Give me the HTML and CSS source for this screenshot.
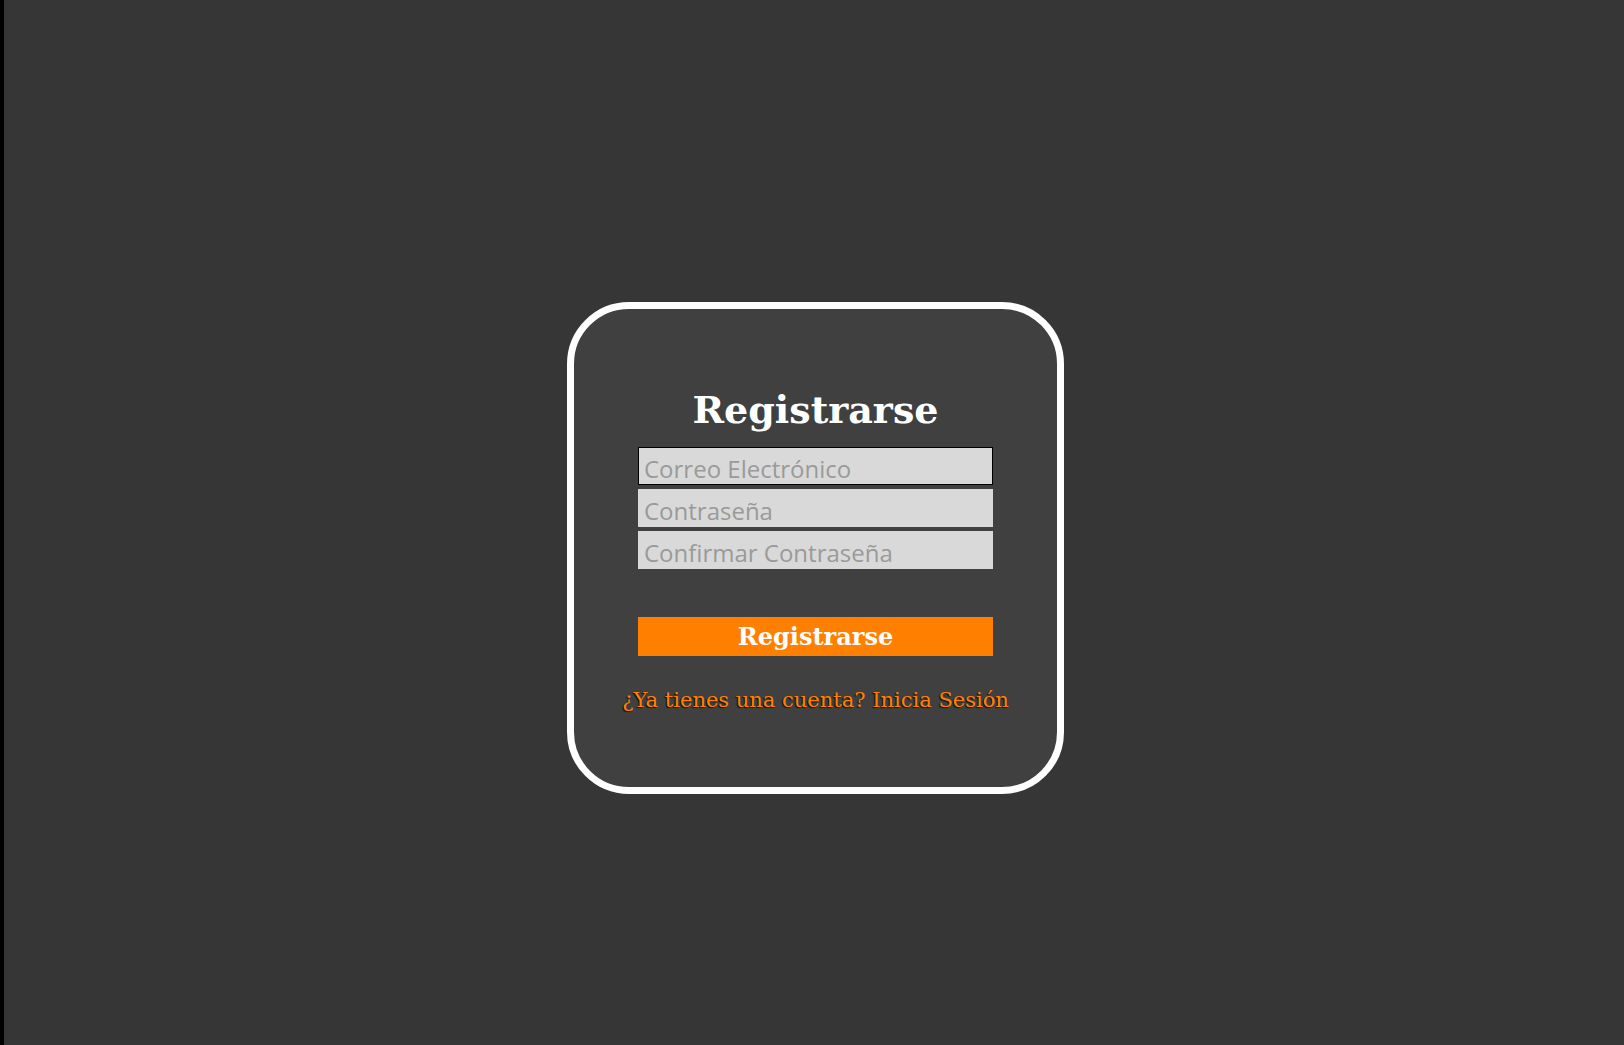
FILE: index.html
```html
<!DOCTYPE html>
<html lang="es">
<head>
<meta charset="utf-8">
<title>Registrarse</title>
<link rel="stylesheet" href="styles.css">
</head>
<body>
<main class="page">
  <form class="card">
    <h1 class="title">Registrarse</h1>
    <div class="fields">
      <input class="field field-active" type="email" placeholder="Correo Electrónico">
      <input class="field" type="password" placeholder="Contraseña">
      <input class="field" type="password" placeholder="Confirmar Contraseña">
    </div>
    <button class="submit" type="button">Registrarse</button>
    <a class="login-link" href="#">¿Ya tienes una cuenta? Inicia Sesión</a>
  </form>
</main>
</body>
</html>
```
FILE: styles.css
```css
* { box-sizing: border-box; }
html, body { margin: 0; padding: 0; height: 100%; }
body {
  background: #363636;
  border-left: 4px solid #000;
}
.page {
  min-height: 100%;
  display: flex;
  justify-content: center;
  align-items: flex-start;
  padding-top: 302px;
  padding-left: 3px;
}
.card {
  width: 497px;
  height: 492px;
  border: 7px solid #fff;
  border-radius: 62px;
  background: #404040;
  display: flex;
  flex-direction: column;
  align-items: center;
  padding-top: 77px;
}
.title {
  margin: 0;
  font-family: "DejaVu Serif", "Liberation Serif", serif;
  font-weight: bold;
  font-size: 38px;
  line-height: 48px;
  color: #fff;
}
.fields {
  margin-top: 13px;
  display: flex;
  flex-direction: column;
  gap: 4px;
  width: 355px;
}
.field {
  display: block;
  width: 355px;
  height: 38px;
  margin: 0;
  border: 1px solid transparent;
  padding: 4px 5px 0 5px;
  background: #d9d9d9;
  font-family: "Open Sans", sans-serif;
  font-size: 24px;
  color: #333;
  outline: none;
}
.field-active { border-color: #000; }
.field::placeholder { color: #9a9a9a; }
.submit {
  margin-top: 48px;
  width: 355px;
  height: 39px;
  border: 0;
  padding: 0;
  background: #ff8000;
  color: #fff;
  font-family: "DejaVu Serif", "Liberation Serif", serif;
  font-weight: bold;
  font-size: 24px;
  line-height: 39px;
}
.login-link {
  margin-top: 32px;
  font-family: "DejaVu Serif", "Liberation Serif", serif;
  font-size: 21px;
  line-height: 24px;
  color: #ff8000;
  text-decoration: none;
  text-shadow: -1px 1px 1px rgba(0, 0, 0, 0.7);
}
```
